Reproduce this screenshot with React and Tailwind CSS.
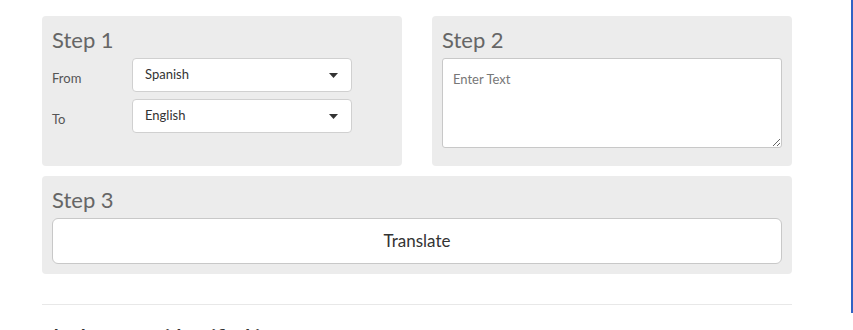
import React from 'react';

function Caret() {
  return (
    <svg width="9" height="5" viewBox="0 0 9 5" className="shrink-0">
      <path d="M0 0 L9 0 L4.5 5 Z" fill="#333" />
    </svg>
  );
}

function SelectBox({ value }) {
  return (
    <div className="flex h-[34px] w-[220px] items-center justify-between rounded-[4px] border border-[#d0d0d0] bg-white pl-[12px] pr-[13px] text-[13px] text-[#333]">
      <span>{value}</span>
      <Caret />
    </div>
  );
}

export default function App() {
  return (
    <div className="relative h-[330px] w-[853px] overflow-hidden bg-white font-['Lato','Liberation_Sans',sans-serif]">
      <div className="ml-[42px] w-[750px] pt-[16px]">
        <div className="flex gap-[30px]">
          {/* Step 1 */}
          <div className="h-[150px] w-[360px] rounded-[4px] bg-[#ececec] px-[10px] pt-[10px]">
            <h3 className="text-[22px] leading-[28px] text-[#666]">Step 1</h3>
            <div className="mt-[4px] grid grid-cols-[80px_220px] items-center gap-y-[7px] text-[13px] text-[#555]">
              <span className="pt-[7px]">From</span>
              <SelectBox value="Spanish" />
              <span className="pt-[7px]">To</span>
              <SelectBox value="English" />
            </div>
          </div>

          {/* Step 2 */}
          <div className="h-[150px] w-[360px] rounded-[4px] bg-[#ececec] px-[10px] pt-[10px]">
            <h3 className="text-[22px] leading-[28px] text-[#666]">Step 2</h3>
            <textarea
              placeholder="Enter Text"
              className="mt-[4px] block h-[90px] w-[340px] rounded-[3px] border border-[#c8c8c8] bg-white px-[10px] py-[11px] text-[13px] text-[#333] outline-none placeholder:text-[#777]"
            />
          </div>
        </div>

        {/* Step 3 */}
        <div className="mt-[10px] h-[98px] rounded-[4px] bg-[#ececec] px-[10px] pt-[10px]">
          <h3 className="text-[22px] leading-[28px] text-[#666]">Step 3</h3>
          <button className="mt-[4px] flex h-[46px] w-full items-center justify-center rounded-[6px] border border-[#c8c8c8] bg-white text-[17px] text-[#333]">
            Translate
          </button>
        </div>

        <hr className="mt-[30px] border-t border-[#e8e8e8]" />
        <h4 className="mt-[17px] text-[20px] font-bold text-[#333]">The language identified is</h4>
      </div>

      <div className="absolute right-0 top-0 h-[313px] w-[2px] bg-[#3062c4]" />
    </div>
  );
}
